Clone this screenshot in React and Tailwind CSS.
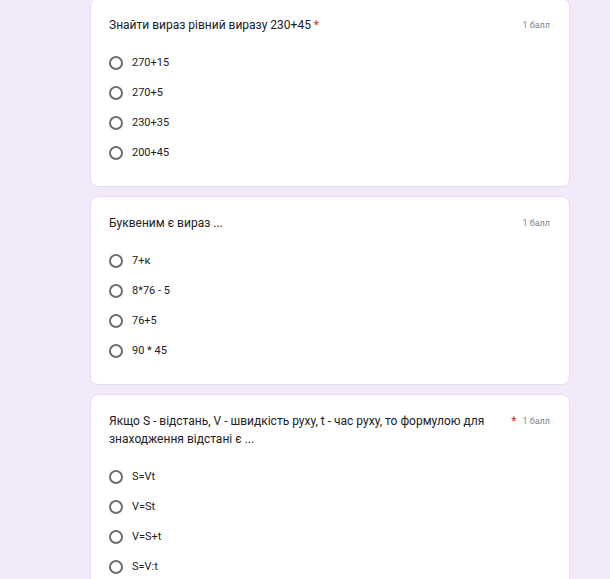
const questions = [
  {
    title: "Знайти вираз рівний виразу 230+45",
    required: true,
    inlineStar: true,
    options: ["270+15", "270+5", "230+35", "200+45"],
  },
  {
    title: "Буквеним є вираз ...",
    required: false,
    options: ["7+к", "8*76 - 5", "76+5", "90 * 45"],
  },
  {
    title:
      "Якщо S - відстань, V - швидкість руху, t - час руху, то формулою для знаходження відстані є ...",
    required: true,
    inlineStar: false,
    options: ["S=Vt", "V=St", "V=S+t", "S=V:t"],
  },
];

function Radio() {
  return (
    <span className="w-[14px] h-[14px] rounded-full border-2 border-[#6b6f74] shrink-0" />
  );
}

function QuestionCard({ q, first }) {
  return (
    <div
      className={`bg-white rounded-lg border border-[#e6dcf3] pl-[18px] pr-[19px] pt-[17px] pb-[18px] ${
        first ? "-mt-[2px]" : ""
      }`}
    >
      <div className="flex items-start justify-between">
        <div className="max-w-[400px] text-[12px] leading-[18px] text-[#202124]">
          {q.title}
          {q.required && q.inlineStar && (
            <span className="text-[#d93025]"> *</span>
          )}
        </div>
        <div className="flex items-center gap-[6px] pt-[2px] text-[9px] leading-[14px] text-[#80868b] shrink-0">
          {q.required && !q.inlineStar && (
            <span className="text-[#d93025] text-[12px]">*</span>
          )}
          <span>1 балл</span>
        </div>
      </div>
      <div className="mt-[14px] flex flex-col">
        {q.options.map((o) => (
          <div key={o} className="flex items-center h-[30px] gap-[9px]">
            <Radio />
            <span className="text-[11px] text-[#202124]">{o}</span>
          </div>
        ))}
      </div>
    </div>
  );
}

export default function App() {
  return (
    <div
      className="min-h-[579px] bg-[#f2e9fb] overflow-hidden"
      style={{ fontFamily: "Roboto, 'Liberation Sans', sans-serif" }}
    >
      <div className="w-[480px] ml-[90px] flex flex-col gap-[9px]">
        {questions.map((q, i) => (
          <QuestionCard key={i} q={q} first={i === 0} />
        ))}
      </div>
    </div>
  );
}
